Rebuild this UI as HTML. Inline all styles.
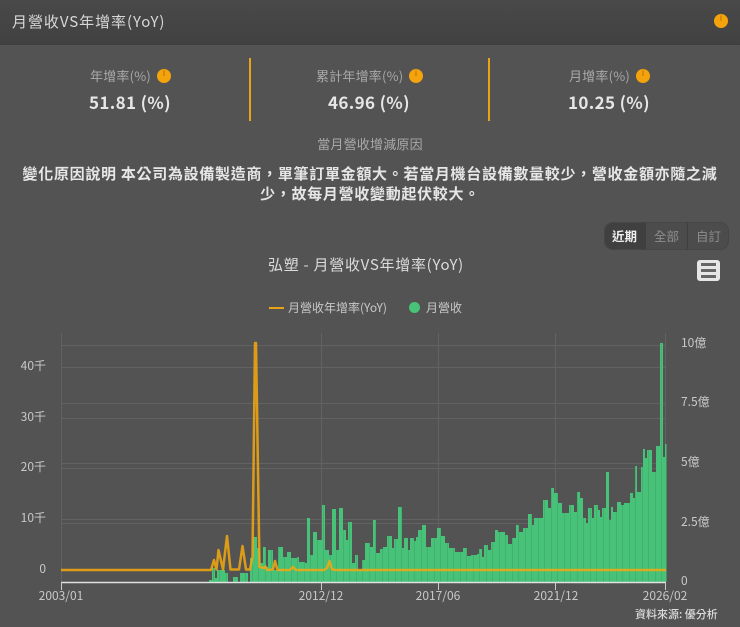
<!DOCTYPE html>
<html lang="zh-Hant">
<head>
<meta charset="utf-8">
<title>月營收VS年增率(YoY)</title>
<style>
html,body{margin:0;padding:0;background:#535353}
#p{position:relative;width:740px;height:627px;overflow:hidden;background:#535353;font-family:"Noto Sans CJK TC","Liberation Sans",sans-serif;color:#ddd}
#p div{position:absolute;white-space:nowrap;line-height:1}
.c{transform:translateX(-50%)}
.h{left:0;top:0;width:740px;height:44px;background:linear-gradient(#494949,#414141);border-bottom:1px solid #3f3f3f}
.i{width:14px;height:14px;border-radius:50%;background:#f5a30c;color:#a87000;font:400 10px/14px "Liberation Sans",sans-serif;text-align:center}
.l{font-size:13px;color:#a9a9a9;letter-spacing:.2px}
.v{font-size:17px;font-weight:700;color:#e6e6e6;letter-spacing:.35px}
.d{width:2px;height:63px;top:58px;background:#e8a317}
</style>
</head>
<body>
<div id="p">
<div class="h"></div>
<div style="left:12px;top:14px;font-size:15px;letter-spacing:.95px;color:#d8d8d8">月營收VS年增率(YoY)</div>
<div class="i" style="left:714px;top:14px">i</div>

<div class="l" style="left:90px;top:69px">年增率(%)</div><div class="i" style="left:157px;top:69px">i</div>
<div class="v" style="left:89px;top:93px">51.81 (%)</div>
<div class="d" style="left:249px"></div>
<div class="l" style="left:316px;top:69px">累計年增率(%)</div><div class="i" style="left:409px;top:69px">i</div>
<div class="v" style="left:328px;top:93px">46.96 (%)</div>
<div class="d" style="left:488px"></div>
<div class="l" style="left:569px;top:69px">月增率(%)</div><div class="i" style="left:636px;top:69px">i</div>
<div class="v" style="left:568px;top:93px">10.25 (%)</div>

<div class="l c" style="left:370px;top:137px">當月營收增減原因</div>
<div class="c" style="left:370px;top:166px;font-size:15px;font-weight:700;letter-spacing:.7px;color:#e6e6e6">變化原因說明 本公司為設備製造商，單筆訂單金額大。若當月機台設備數量較少，營收金額亦隨之減</div>
<div class="c" style="left:370px;top:186px;font-size:15px;font-weight:700;letter-spacing:.7px;color:#e6e6e6">少，故每月營收變動起伏較大。</div>

<div style="left:604px;top:222px;width:123px;height:26px;border:1px solid #464646;border-radius:9px;background:#4c4c4c"></div>
<div style="left:605px;top:223px;width:40px;height:26px;border-radius:8px 0 0 8px;background:#404040"></div>
<div style="left:645px;top:223px;width:1px;height:26px;background:#3f3f3f"></div>
<div style="left:687px;top:223px;width:1px;height:26px;background:#3f3f3f"></div>
<div style="left:612px;top:230px;font-size:12.5px;font-weight:700;color:#eee">近期</div>
<div style="left:654px;top:230px;font-size:12.5px;color:#8e8e8e">全部</div>
<div style="left:696px;top:230px;font-size:12.5px;color:#8e8e8e">自訂</div>

<div style="left:268px;top:257px;font-size:15px;letter-spacing:.72px;color:#dcdcdc">弘塑 - 月營收VS年增率(YoY)</div>
<div style="left:697px;top:260px;width:23px;height:21px;border-radius:3px;background:#e6e6e6"></div>
<div style="left:701px;top:263px;width:15px;height:3px;background:#666"></div>
<div style="left:701px;top:269px;width:15px;height:3px;background:#666"></div>
<div style="left:701px;top:275px;width:15px;height:3px;background:#666"></div>

<div style="left:269px;top:307px;width:15px;height:2px;background:#e8a317"></div>
<div style="left:288px;top:302px;font-size:12px;color:#c8c8c8">月營收年增率(YoY)</div>
<div style="left:409px;top:302px;width:11px;height:11px;border-radius:50%;background:#47c278"></div>
<div style="left:426px;top:302px;font-size:12px;color:#c8c8c8">月營收</div>

<svg style="position:absolute;left:0;top:0" width="740" height="627" viewBox="0 0 740 627">
<defs>
<pattern id="b" width="13" height="10" patternUnits="userSpaceOnUse" x="2">
<rect width="13" height="10" fill="#47c278"/>
<rect x="3" width="1" height="10" fill="#41b36f"/>
<rect x="9" width="1" height="10" fill="#41b36f"/>
</pattern>
</defs>
<g stroke="#626262" stroke-width="1" fill="none">
<path d="M61 345.500H666M61 367.500H666M61 403.500H666M61 418.500H666M61 463.500H666M61 468.500H666M61 519.500H666M61 523.500H666"/>
<path d="M61.500 333V582M321.500 333V582M438.500 333V582M555.500 333V582M665.500 333V582"/>
</g>
<path fill="url(#b)" d="M209 582V580H212V568H215V578H217V570H225V573H228V582H233V577H238V582H240V573H248V582H250V558H253V537H257V548H260V563H263V547H266V567H268V550H273V570H278V547H283V557H287V552H291V558H297V557H299V562H305V563H307V518H310V555H313V532H317V540H322V505H325V550H329V555H332V509H336V550H339V508H343V530H346V540H348V522H352V563H355V555H358V570H362V560H365V543H370V547H373V520H376V553H380V549H383V547H387V536H392V548H394V539H398V507H402V548H404V538H408V550H410V538H414V541H416V537H418V530H422V525H426V547H431V538H437V528H441V536H445V543H449V548H455V552H463V548H467V556H471V555H477V554H479V549H482V557H484V545H488V550H491V542H495V530H498V532H505V535H508V544H512V538H516V525H519V532H523V528H528V514H532V525H534V518H543V500H548V508H551V488H554V493H558V503H560V503H562V513H569V505H574V512H577V492H580V498H583V518H586V523H588V508H592V518H594V505H598V510H600V517H602V508H606V472H609V520H611V507H613V512H617V502H621V505H624V503H630V493H633V498H635V466H637V492H641V467H643V449H645V458H647V450H652V472H656V446H660V343H663V457H665V444H666.500V582Z"/>
<path d="M61 582.500H666" stroke="#e2e2e2" stroke-width="1.500" fill="none"/>
<path d="M61.500 582V590M321.500 582V590M438.500 582V590M555.500 582V590M665.500 582V590" stroke="#ccc" stroke-width="1" fill="none"/>
<path d="M61 570H211L214 560L216.500 569.500L218.500 550L223 569.500L227 536L230.500 569.500H239L242.500 546L246 569.500H250L252.500 557L255 343H256L259.500 567L264 568L265.500 566.500L267 570L273 569.500L275 561L277.500 570H290L293 567L296 570H324L327 568L329.500 561L332 569.500L336 570H666" fill="none" stroke="#f5a80f" stroke-width="2.500" stroke-linejoin="round" opacity=".85"/>
<text x="46" y="370" text-anchor="end" font-size="12" fill="#c8c8c8">40千</text>
<text x="46" y="421" text-anchor="end" font-size="12" fill="#c8c8c8">30千</text>
<text x="46" y="471" text-anchor="end" font-size="12" fill="#c8c8c8">20千</text>
<text x="46" y="522" text-anchor="end" font-size="12" fill="#c8c8c8">10千</text>
<text x="46" y="573" text-anchor="end" font-size="12" fill="#c8c8c8">0</text>
<text x="681" y="347" font-size="12" fill="#c8c8c8">10億</text>
<text x="681" y="406" font-size="12" fill="#c8c8c8">7.5億</text>
<text x="681" y="466" font-size="12" fill="#c8c8c8">5億</text>
<text x="681" y="526" font-size="12" fill="#c8c8c8">2.5億</text>
<text x="681" y="585" font-size="12" fill="#c8c8c8">0</text>
<text x="61" y="600" text-anchor="middle" font-size="12" fill="#c8c8c8">2003/01</text>
<text x="321" y="600" text-anchor="middle" font-size="12" fill="#c8c8c8">2012/12</text>
<text x="438" y="600" text-anchor="middle" font-size="12" fill="#c8c8c8">2017/06</text>
<text x="556" y="600" text-anchor="middle" font-size="12" fill="#c8c8c8">2021/12</text>
<text x="665" y="600" text-anchor="middle" font-size="12" fill="#c8c8c8">2026/02</text>
<text x="635" y="618" font-size="11" font-weight="500" fill="#dcdcdc">資料來源: 優分析</text>
</svg>
</div>
</body>
</html>
